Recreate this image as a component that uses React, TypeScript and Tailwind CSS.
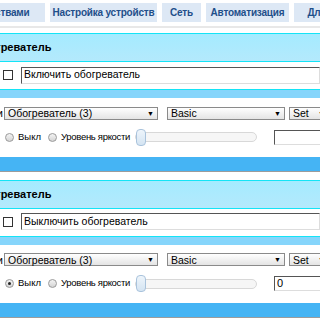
import { useState } from "react";

const TABS = [
  { label: "Управление устройствами", w: "w-[158px]" },
  { label: "Настройка устройств", w: "w-[107px]" },
  { label: "Сеть", w: "w-[39px]" },
  { label: "Автоматизация", w: "w-[83px]" },
  { label: "Для разработчиков", w: "w-[120px]" },
];

function Tabs() {
  return (
    <div className="h-[33px] pt-[3px]">
      <div className="flex gap-[5px] -ml-[113px] whitespace-nowrap">
        {TABS.map((t) => (
          <div
            key={t.label}
            className={`${t.w} h-[19px] shrink-0 bg-[#dde8f5] flex items-center justify-center text-[10px] tracking-[-0.2px] font-bold text-[#1f4f8a]`}
          >
            {t.label}
          </div>
        ))}
      </div>
      <div className="mt-[4px] h-[2px] bg-[#e8e8e8]" />
    </div>
  );
}

function Select({ text, className }: { text: string; className: string }) {
  return (
    <div
      className={`${className} h-[13px] shrink-0 border border-[#8a8a8a] bg-gradient-to-b from-white to-[#e4e4e4] flex items-center justify-between pl-[3px] pr-[3px] text-[10.5px] leading-none text-black whitespace-pre`}
    >
      <span>{text}</span>
      <span className="text-[7px]">▼</span>
    </div>
  );
}

function Radio({ checked }: { checked: boolean }) {
  return (
    <span className="w-[9px] h-[9px] rounded-full border border-[#9a9a9a] bg-gradient-to-b from-[#f4f4f4] to-[#d4d4d4] flex items-center justify-center shrink-0">
      {checked && <span className="w-[3px] h-[3px] rounded-full bg-[#222]" />}
    </span>
  );
}

function Section({ action, on, level }: { action: string; on: boolean; level: string }) {
  const [mode, setMode] = useState(on ? "off" : "");
  const [val, setVal] = useState(level);
  return (
    <div>
      <div className="h-[29px] border-y border-[#14e4f6] bg-gradient-to-b from-[#a4ebff] to-[#b4e9fc] flex items-center whitespace-nowrap">
        <span className="-ml-[26px] text-[11px] font-bold text-black">Обогреватель</span>
      </div>
      <div className="mt-[4px] h-[18px] flex items-center">
        <span className="ml-[3px] w-[10px] h-[10px] border border-[#333] bg-white shrink-0" />
        <div className="ml-[8px] flex-1 h-[17px] border border-t-[#555] border-l-[#555] border-r-[#ddd] border-b-[#ddd] bg-white flex items-center pl-[2px] text-[10.5px] text-black whitespace-nowrap">
          {action}
        </div>
      </div>
      <div className="mt-[5px] h-[9px] border-t border-[#14e4f6] bg-[#86d5fb]" />
      <div className="mt-[7px] flex items-center gap-[9px] -ml-[3px]">
        <div className="flex items-center gap-[1px]">
          <span className="text-[11px] w-[6px] overflow-hidden flex justify-end">и</span>
          <Select text="Обогреватель (3)" className="w-[154px]" />
        </div>
        <Select text="Basic" className="w-[118px]" />
        <Select text="Set" className="w-[40px] -ml-[5px]" />
      </div>
      <div className="mt-[7px] h-[17px] flex items-center text-[9.5px] text-black whitespace-nowrap">
        <button onClick={() => setMode("off")} className="ml-[5px] w-[38px] flex items-center gap-[4px] shrink-0">
          <Radio checked={mode === "off"} />
          Выкл
        </button>
        <button onClick={() => setMode("lvl")} className="ml-[5px] w-[82px] flex items-center gap-[4px] shrink-0 tracking-[-0.3px]">
          <Radio checked={mode === "lvl"} />
          Уровень яркости
        </button>
        <div className="ml-[5px] relative w-[122px] h-[17px] flex items-center shrink-0">
          <div className="w-full h-[10px] rounded-[5px] border border-[#d8d8d8] bg-[#f6f6f6]" />
          <div className="absolute left-[1px] top-0 w-[10px] h-[17px] rounded-[4px] border border-[#a9c3dc] bg-gradient-to-b from-[#eef5fb] to-[#d4e4f2]" />
        </div>
        <input
          value={val}
          onChange={(e) => setVal(e.target.value)}
          className="ml-[17px] w-[60px] h-[15px] shrink-0 border border-t-[#555] border-l-[#555] border-r-[#ddd] border-b-[#ddd] px-[2px] text-[11px] outline-none"
        />
      </div>
      <div className="mt-[11px] h-[14px] bg-[#45b4f4]" />
      <div className="h-[1px] bg-[#9c9c9c]" />
      <div className="h-[8px]" />
    </div>
  );
}

export default function App() {
  return (
    <div className="w-[320px] h-[320px] overflow-hidden bg-white font-['Liberation_Sans',Arial,sans-serif]">
      <Tabs />
      <Section action="Включить обогреватель" on={false} level="" />
      <Section action="Выключить обогреватель" on={true} level="0" />
    </div>
  );
}
